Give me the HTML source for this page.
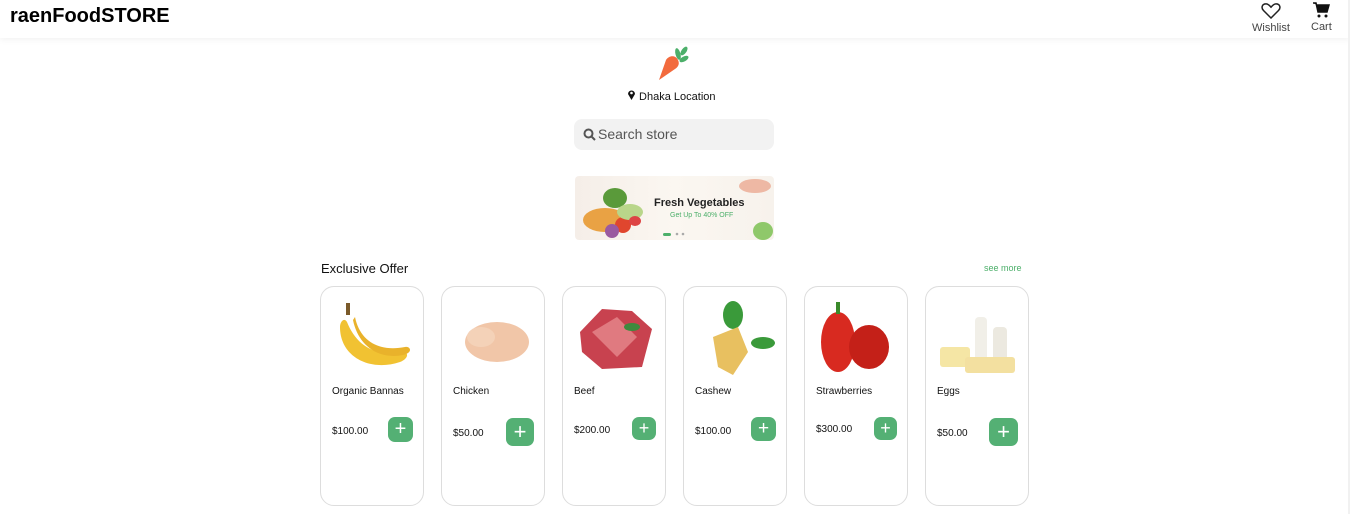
<!DOCTYPE html>
<html><head><meta charset="utf-8"><style>
*{box-sizing:border-box;margin:0;padding:0}
body{width:1350px;height:514px;overflow:hidden;background:#fff;font-family:"Liberation Sans",sans-serif;position:relative;color:#111}
.hdr{position:absolute;left:0;top:0;width:1350px;height:38px;background:#fff;box-shadow:0 2px 6px rgba(0,0,0,.05)}
.logo{position:absolute;left:10px;top:5px;font-size:20px;font-weight:bold;color:#000}
.ic{position:absolute;top:2px;font-size:11px;color:#444;text-align:center}
.sb{position:absolute;right:0;top:0;width:2px;height:514px;background:#f1f1f1}
.loc{position:absolute;left:627px;top:89px;font-size:11px;color:#111}
.search{position:absolute;left:574px;top:119px;width:200px;height:31px;border-radius:8px;background:#f2f2f2;font-size:14px;color:#555;padding:7px 0 0 24px}
.banner{position:absolute;left:575px;top:176px;width:199px;height:64px;border-radius:4px;background:linear-gradient(90deg,#f5eee8,#fbf7f1 50%,#f7f2ec);overflow:hidden}
.eo{position:absolute;left:321px;top:261px;font-size:13px}
.see{position:absolute;left:984px;top:263px;font-size:9px;color:#4caf6a}
.card{position:absolute;top:286px;width:104px;height:220px;border:1px solid #ddd;border-radius:14px}
.card .n{position:absolute;left:11px;top:99px;font-size:10px}
.card .p{position:absolute;left:11px;font-size:10px}
.card .b{position:absolute;background:#54b074;border-radius:7px;color:#fff;text-align:center;font-weight:300}
.img{position:absolute;left:9px;top:10px;width:84px;height:80px}
</style></head><body>
<div class="hdr"><div class="logo">raenFoodSTORE</div>
<div class="ic" style="left:1252px"><svg width="20" height="17" viewBox="0 0 24 20"><path d="M12 19 3 10C0 7 1 2 6 2c3 0 5 3 6 4 1-1 3-4 6-4 5 0 6 5 3 8z" fill="none" stroke="#222" stroke-width="1.8"/></svg><br>Wishlist</div>
<div class="ic" style="left:1311px"><svg width="18" height="16" viewBox="0 0 18 16"><path d="M1 1h3l2 9h9l2-7H5" fill="#111" stroke="#111" stroke-width="1.5"/><circle cx="7" cy="14" r="1.5" fill="#111"/><circle cx="14" cy="14" r="1.5" fill="#111"/></svg><br>Cart</div>
</div>
<div class="sb"></div>
<svg style="position:absolute;left:656px;top:46px" width="34" height="36" viewBox="0 0 34 36"><path d="M3 34 10 14c3-5 10-5 12 0 2 4 0 7-3 9z" fill="#f26a3d"/><ellipse cx="22" cy="8" rx="2.5" ry="6" fill="#4caf6a" transform="rotate(-15 22 8)"/><ellipse cx="28" cy="13" rx="2.5" ry="5" fill="#4caf6a" transform="rotate(60 28 13)"/><ellipse cx="28" cy="5" rx="2.5" ry="5" fill="#4caf6a" transform="rotate(35 28 5)"/></svg>
<div class="loc"><svg width="9" height="11" viewBox="0 0 9 11"><path d="M4.5 11 1 5a3.5 3.5 0 1 1 7 0z" fill="#111"/><circle cx="4.5" cy="4" r="1.3" fill="#fff"/></svg> Dhaka Location</div>
<div class="search"><svg style="position:absolute;left:9px;top:9px" width="13" height="13" viewBox="0 0 13 13"><circle cx="5.5" cy="5.5" r="4" fill="none" stroke="#555" stroke-width="2"/><path d="M8.5 8.5 12 12" stroke="#555" stroke-width="2"/></svg>Search store</div>
<div class="banner">
<svg width="199" height="64"><ellipse cx="40" cy="22" rx="12" ry="10" fill="#5a9a3a"/><ellipse cx="30" cy="44" rx="22" ry="12" fill="#e9a244"/><circle cx="48" cy="49" r="8" fill="#e0462e"/><circle cx="37" cy="55" r="7" fill="#9a5aa0"/><ellipse cx="55" cy="36" rx="13" ry="8" fill="#b9d68a"/><ellipse cx="60" cy="45" rx="6" ry="5" fill="#d44"/><ellipse cx="188" cy="55" rx="10" ry="9" fill="#8fc86a"/><ellipse cx="180" cy="10" rx="16" ry="7" fill="#e47d5c" opacity=".5"/><rect x="88" y="57" width="8" height="3" rx="1.5" fill="#4caf6a"/><circle cx="102" cy="58" r="1.3" fill="#aaa"/><circle cx="108" cy="58" r="1.3" fill="#aaa"/>
<text x="79" y="30" font-family="Liberation Sans" font-weight="bold" font-size="11" fill="#222">Fresh Vegetables</text>
<text x="95" y="41" font-family="Liberation Sans" font-size="7" fill="#4caf6a">Get Up To 40% OFF</text></svg></div>
<div class="eo">Exclusive Offer</div><div class="see">see more</div>

<div class="card" style="left:320px"><svg class="img" viewBox="0 0 84 80"><path d="M10 30c0 30 30 45 60 35 8-3 10-10 2-10-25 5-45-5-55-30-3-5-7 0-7 5z" fill="#f1c232"/><path d="M25 20c5 25 25 35 50 30 6-1 8 6-2 8-25 5-45-10-50-35z" fill="#e9b22b"/><rect x="16" y="6" width="4" height="12" fill="#7a5a2a"/></svg><div class="n">Organic Bannas</div><div class="p" style="top:139px">$100.00</div><div class="b" style="left:67px;top:130px;width:25px;height:25px;font-size:20px;line-height:24px">+</div></div>
<div class="card" style="left:441px"><svg class="img" viewBox="0 0 84 80"><ellipse cx="46" cy="45" rx="32" ry="20" fill="#f1c6a8"/><ellipse cx="30" cy="40" rx="14" ry="10" fill="#f4d2b8"/></svg><div class="n">Chicken</div><div class="p" style="top:141px">$50.00</div><div class="b" style="left:64px;top:131px;width:28px;height:28px;font-size:22px;line-height:27px">+</div></div>
<div class="card" style="left:562px"><svg class="img" viewBox="0 0 84 80"><path d="M8 35 30 12 60 14 80 32 70 70 30 72 10 55z" fill="#c8424f"/><path d="M20 35 45 20 65 40 45 60z" fill="#e07a80"/><ellipse cx="60" cy="30" rx="8" ry="4" fill="#3e8a3e"/></svg><div class="n">Beef</div><div class="p" style="top:138px">$200.00</div><div class="b" style="left:69px;top:130px;width:24px;height:23px;font-size:18px;line-height:22px">+</div></div>
<div class="card" style="left:683px"><svg class="img" viewBox="0 0 84 80"><ellipse cx="40" cy="18" rx="10" ry="14" fill="#3a9a3a"/><ellipse cx="70" cy="46" rx="12" ry="6" fill="#3a9a3a"/><path d="M20 40 45 30 55 55 40 78 25 70z" fill="#e8c060"/></svg><div class="n">Cashew</div><div class="p" style="top:139px">$100.00</div><div class="b" style="left:67px;top:130px;width:25px;height:24px;font-size:19px;line-height:23px">+</div></div>
<div class="card" style="left:804px"><svg class="img" viewBox="0 0 84 80"><ellipse cx="24" cy="45" rx="17" ry="30" fill="#d82a20"/><ellipse cx="55" cy="50" rx="20" ry="22" fill="#c42018"/><rect x="22" y="5" width="4" height="12" fill="#3a8a2a"/></svg><div class="n">Strawberries</div><div class="p" style="top:137px">$300.00</div><div class="b" style="left:69px;top:130px;width:23px;height:23px;font-size:18px;line-height:22px">+</div></div>
<div class="card" style="left:925px"><svg class="img" viewBox="0 0 84 80"><rect x="40" y="20" width="12" height="45" rx="4" fill="#f1efe8"/><rect x="58" y="30" width="14" height="35" rx="4" fill="#ece9e0"/><rect x="5" y="50" width="30" height="20" rx="3" fill="#f5e6a5"/><rect x="30" y="60" width="50" height="16" rx="3" fill="#f3e0a0"/></svg><div class="n">Eggs</div><div class="p" style="top:141px">$50.00</div><div class="b" style="left:63px;top:131px;width:29px;height:28px;font-size:22px;line-height:27px">+</div></div>
</body></html>
